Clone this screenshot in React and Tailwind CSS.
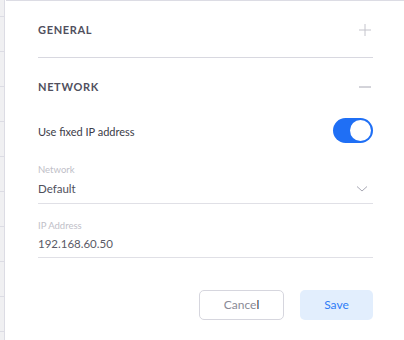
import React from "react";

export default function App() {
  const strips = [16, 51, 86, 121, 156, 191, 226, 261, 296, 331];
  return (
    <div className="relative w-[404px] h-[340px] bg-white overflow-hidden" style={{ fontFamily: "Lato, 'Open Sans', sans-serif" }}>
      <div className="absolute left-0 top-0 w-[5px] h-full bg-[#f0f0f2] border-r border-[#dcdce4]">
        {strips.map((y) => (
          <div key={y} className="absolute left-0 w-[5px] h-px bg-[#dcdce4]" style={{ top: y }} />
        ))}
      </div>
      <div className="h-full ml-[6px] border-t border-[#dcdce4] pl-[32px] pr-[31px] flex flex-col">
        <div className="h-[57px] shrink-0 flex items-center justify-between border-b border-[#d8d8e0]">
          <span className="text-[11px] font-bold tracking-[0.06em] text-[#50505e] pt-[3px]">GENERAL</span>
          <svg width="12" height="12" viewBox="0 0 12 12" className="mr-[2px] mt-[2px]">
            <path d="M6 0v12M0 6h12" stroke="#c4c4cc" strokeWidth="1" />
          </svg>
        </div>
        <div className="h-[58px] shrink-0 flex items-center justify-between">
          <span className="text-[11px] font-bold tracking-[0.06em] text-[#50505e]">NETWORK</span>
          <svg width="12" height="2" viewBox="0 0 12 2" className="mr-[2px]">
            <path d="M0 1h12" stroke="#a8a8b4" strokeWidth="1" />
          </svg>
        </div>
        <div className="flex items-center justify-between h-[30px] -mt-[1px] shrink-0">
          <span className="text-[11px] text-[#3c3c48] pt-[4px]">Use fixed IP address</span>
          <div className="w-[40px] h-[25px] rounded-full bg-[#1f6ff5] flex items-center justify-end pr-[2px]">
            <div className="w-[21px] h-[21px] rounded-full bg-white" />
          </div>
        </div>
        <div className="mt-[18px] flex flex-col border-b border-[#e0e0e6] pb-[6px] shrink-0">
          <span className="text-[9.5px] text-[#c0c0c8] leading-[12px] pt-[1px]">Network</span>
          <div className="flex items-center justify-between mt-[5px]">
            <span className="text-[11.5px] text-[#50505c] leading-[16px]">Default</span>
            <svg width="12" height="8" viewBox="0 0 12 8" className="mr-[5px]">
              <path d="M1 1.5l5 4.5 5-4.5" stroke="#a8a8b4" strokeWidth="1" fill="none" />
            </svg>
          </div>
        </div>
        <div className="mt-[16px] flex flex-col border-b border-[#e0e0e6] pb-[5px] shrink-0">
          <span className="text-[9.5px] text-[#c0c0c8] leading-[12px]">IP Address</span>
          <span className="text-[11.5px] text-[#5a5a66] leading-[16px] mt-[4px]">192.168.60.50</span>
        </div>
        <div className="flex justify-end gap-[16px] mt-[32px] shrink-0">
          <button className="w-[85px] h-[30px] rounded-[5px] border border-[#d6d6de] bg-white text-[12px] text-[#8a8a96] flex items-center justify-center">
            <span>Cance</span>
            <span className="text-[#3c3c48]">l</span>
          </button>
          <button className="w-[73px] h-[30px] rounded-[5px] bg-[#e2eefd] text-[12px] text-[#2f7cf6] flex items-center justify-center">
            Save
          </button>
        </div>
      </div>
    </div>
  );
}
